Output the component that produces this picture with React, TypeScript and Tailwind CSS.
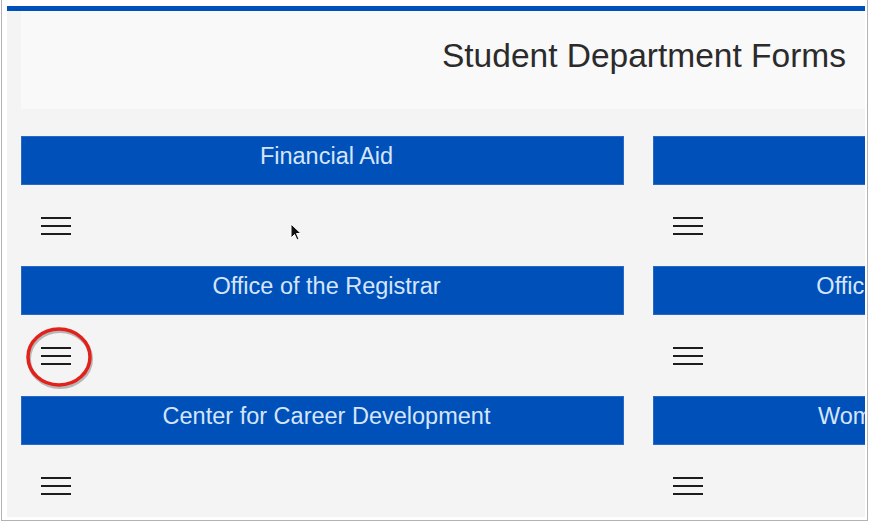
import React from 'react';

const font = { fontFamily: '"Liberation Sans", Arial, sans-serif' };

const columns: string[][] = [
  ['Financial Aid', 'Office of the Registrar', 'Center for Career Development'],
  ['Student Accounts', 'Office of Disability Services', "Women's Resource Center"],
];

const Hamburger = () => (
  <div className="flex w-[30px] flex-col gap-[6px]">
    <span className="block h-[2px] w-full bg-[#1c1c1c]" />
    <span className="block h-[2px] w-full bg-[#1c1c1c]" />
    <span className="block h-[2px] w-full bg-[#1c1c1c]" />
  </div>
);

const FormCard = ({ title, highlight }: { title: string; highlight?: boolean }) => (
  <div className="h-[130px]">
    <div className="flex h-[49px] justify-center whitespace-nowrap border border-[#2a68c8] bg-[#0050b9] pl-[8px] pt-[6px] text-[23.5px] leading-[27px] text-[#d5e5fb]">
      {title}
    </div>
    <div className="relative pl-[20px] pt-[32px]">
      <Hamburger />
      {highlight && (
        <svg className="absolute left-[1px] top-[10px]" width="74" height="66" viewBox="0 0 74 66">
          <ellipse cx="37" cy="32" rx="31" ry="28" fill="none" stroke="#00000040" strokeWidth="4" transform="translate(1 2)" />
          <ellipse cx="37" cy="32" rx="31" ry="28" fill="none" stroke="#e3211b" strokeWidth="3.5" />
        </svg>
      )}
    </div>
  </div>
);

export default function App() {
  return (
    <div className="h-[525px] w-[871px] bg-white" style={font}>
      <div className="ml-[1px] h-[521px] w-[867px] border-x border-b border-[#b3b3b3] bg-white pb-[3px] pl-[5px] pr-[2px] pt-[6px]">
        <div className="h-[5px] bg-[#0050b9]" />
        <div className="relative h-[506px] overflow-hidden bg-[#f4f4f4] pl-[14px]">
          <div className="flex h-[98px] justify-end bg-[#f9f9f9] pr-[19px] pt-[26px]">
            <h1 className="whitespace-nowrap text-[33.5px] leading-[38px] text-[#2b2b2b]">Student Department Forms</h1>
          </div>
          <div className="mt-[27px] flex gap-[29px]">
            {columns.map((col, ci) => (
              <div key={ci} className="w-[603px] shrink-0">
                {col.map((t, ri) => (
                  <FormCard key={t} title={t} highlight={ci === 0 && ri === 1} />
                ))}
              </div>
            ))}
          </div>
          <svg className="absolute left-[283px] top-[212px]" width="14" height="20" viewBox="0 0 14 20">
            <path d="M1 1 L1 15 L4.5 11.5 L7 17 L9 16 L6.5 10.5 L11 10.5 Z" fill="#111" stroke="#fff" strokeWidth="1" />
          </svg>
        </div>
      </div>
    </div>
  );
}
